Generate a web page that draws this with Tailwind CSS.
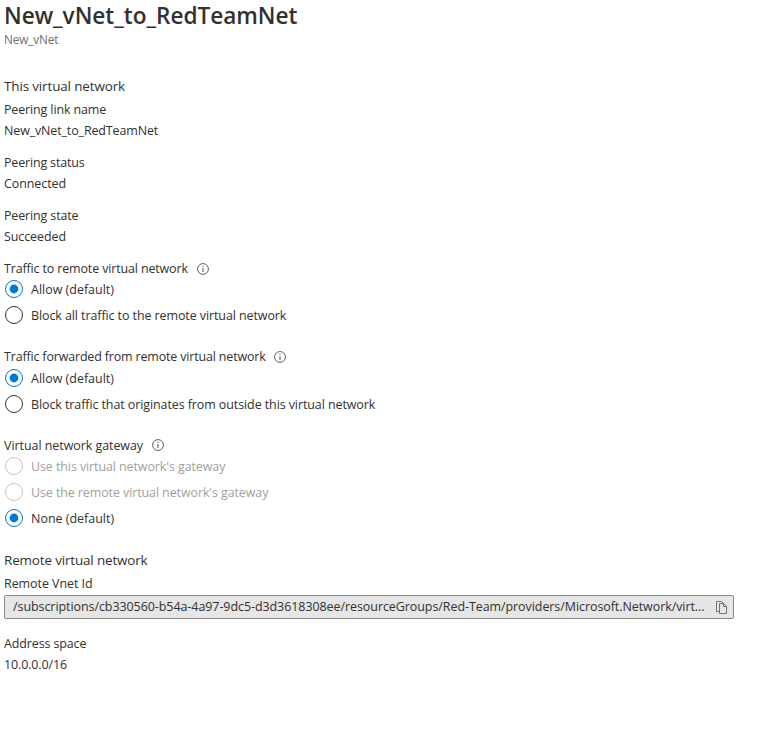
<!DOCTYPE html>
<html lang="en">
<head>
<meta charset="utf-8">
<title>New_vNet_to_RedTeamNet</title>
<script src="https://cdn.jsdelivr.net/npm/@tailwindcss/browser@4"></script>
</head>
<body class="bg-white font-['Open_Sans',sans-serif] text-[12.48px] leading-5 text-[#323130] whitespace-nowrap">
<svg class="hidden">
  <symbol id="info" viewBox="0 0 12 12"><circle cx="6" cy="6" r="5.4" fill="none" stroke="#605e5c" stroke-width="1"/><path d="M6 5v4M6 3v1" stroke="#605e5c" stroke-width="1.1" fill="none"/></symbol>
  <symbol id="radio-on" viewBox="0 0 18 18"><circle cx="9" cy="9" r="8.5" fill="none" stroke="#0078d4"/><circle cx="9" cy="9" r="4.4" fill="#0078d4"/></symbol>
</svg>
<main class="flex flex-col pl-1">
  <header>
    <h1 class="h-8 text-[22.6px] leading-8 font-semibold tracking-[-0.03px]">New_vNet_to_RedTeamNet</h1>
    <p class="h-4 text-[11.8px] leading-[14px] tracking-[-0.12px] text-[#706e6c]">New_vNet</p>
  </header>

  <section class="mt-[27px]">
    <h2 class="h-[22px] text-[13.44px] leading-[22px] tracking-[-0.13px]">This virtual network</h2>
    <dl class="mt-px flex flex-col gap-[11px]">
      <div><dt class="h-[22px] leading-6 tracking-[-0.13px]">Peering link name</dt><dd class="h-5 leading-[22px] tracking-[-0.13px]">New_vNet_to_RedTeamNet</dd></div>
      <div><dt class="h-[22px] leading-6 tracking-[-0.16px]">Peering status</dt><dd class="h-5 leading-[22px] tracking-[-0.08px]">Connected</dd></div>
      <div><dt class="h-[22px] leading-6 tracking-[-0.13px]">Peering state</dt><dd class="h-5 leading-[22px] tracking-[-0.08px]">Succeeded</dd></div>
    </dl>
  </section>

  <section class="mt-3">
    <div class="flex h-5 items-center gap-[9px]"><span class="pt-0.5 tracking-[-0.14px]">Traffic to remote virtual network</span><svg class="mt-px size-3"><use href="#info"/></svg></div>
    <div class="flex flex-col gap-1">
      <label class="flex h-[22px] items-center gap-2"><svg class="ml-px size-[18px]"><use href="#radio-on"/></svg><span class="pt-0.5">Allow (default)</span></label>
      <label class="flex h-[22px] items-center gap-2"><span class="ml-px size-[18px] rounded-full border border-[#323130]"></span><span class="pt-0.5 tracking-[-0.085px]">Block all traffic to the remote virtual network</span></label>
    </div>
  </section>

  <section class="mt-5">
    <div class="flex h-5 items-center gap-[8.5px]"><span class="pt-0.5 tracking-[-0.16px]">Traffic forwarded from remote virtual network</span><svg class="mt-px size-3"><use href="#info"/></svg></div>
    <div class="mt-px flex flex-col gap-1">
      <label class="flex h-[22px] items-center gap-2"><svg class="ml-px size-[18px]"><use href="#radio-on"/></svg><span class="pt-0.5">Allow (default)</span></label>
      <label class="flex h-[22px] items-center gap-2"><span class="ml-px size-[18px] rounded-full border border-[#323130]"></span><span class="pt-0.5 tracking-[-0.085px]">Block traffic that originates from outside this virtual network</span></label>
    </div>
  </section>

  <section class="mt-5">
    <div class="flex h-5 items-center gap-[9px]"><span class="pt-0.5 tracking-[-0.05px]">Virtual network gateway</span><svg class="size-3"><use href="#info"/></svg></div>
    <div class="flex flex-col gap-1">
      <label class="flex h-[22px] items-center gap-2 text-[#a19f9d]"><span class="ml-px size-[18px] rounded-full border border-[#c8c6c4]"></span><span class="pt-0.5 tracking-[-0.09px]">Use this virtual network's gateway</span></label>
      <label class="flex h-[22px] items-center gap-2 text-[#a19f9d]"><span class="ml-px size-[18px] rounded-full border border-[#c8c6c4]"></span><span class="pt-0.5 tracking-[-0.095px]">Use the remote virtual network's gateway</span></label>
      <label class="flex h-[22px] items-center gap-2"><svg class="ml-px size-[18px]"><use href="#radio-on"/></svg><span class="pt-0.5">None (default)</span></label>
    </div>
  </section>

  <section class="mt-5">
    <h2 class="h-[22px] text-[13.44px] leading-[22px] tracking-[-0.15px]">Remote virtual network</h2>
    <div class="mt-px h-[22px] leading-6 tracking-[-0.06px]">Remote Vnet Id</div>
    <div class="mt-px flex h-6 w-[730px] items-center rounded-[2px] border border-[#8a8886] bg-[#e6e6e6] pr-1.5 pl-2">
      <span class="tracking-[-0.06px]">/subscriptions/cb330560-b54a-4a97-9dc5-d3d3618308ee/resourceGroups/Red-Team/providers/Microsoft.Network/virt...</span>
      <svg class="ml-auto h-[13px] w-[11px]" viewBox="0 0 11 13" fill="none" stroke="#75726f" stroke-width="1"><path d="M3.5 10.5H.5V.5H5.5L7 2M3.5 2.5H7.5L10.5 5.5V12.5H3.5ZM7.5 2.5V5.5H10.5"/></svg>
    </div>
    <div class="mt-[13px] h-[22px] leading-6 tracking-[-0.12px]">Address space</div>
    <div class="h-5 leading-[22px] tracking-[-0.12px]">10.0.0.0/16</div>
  </section>
</main>
</body>
</html>
